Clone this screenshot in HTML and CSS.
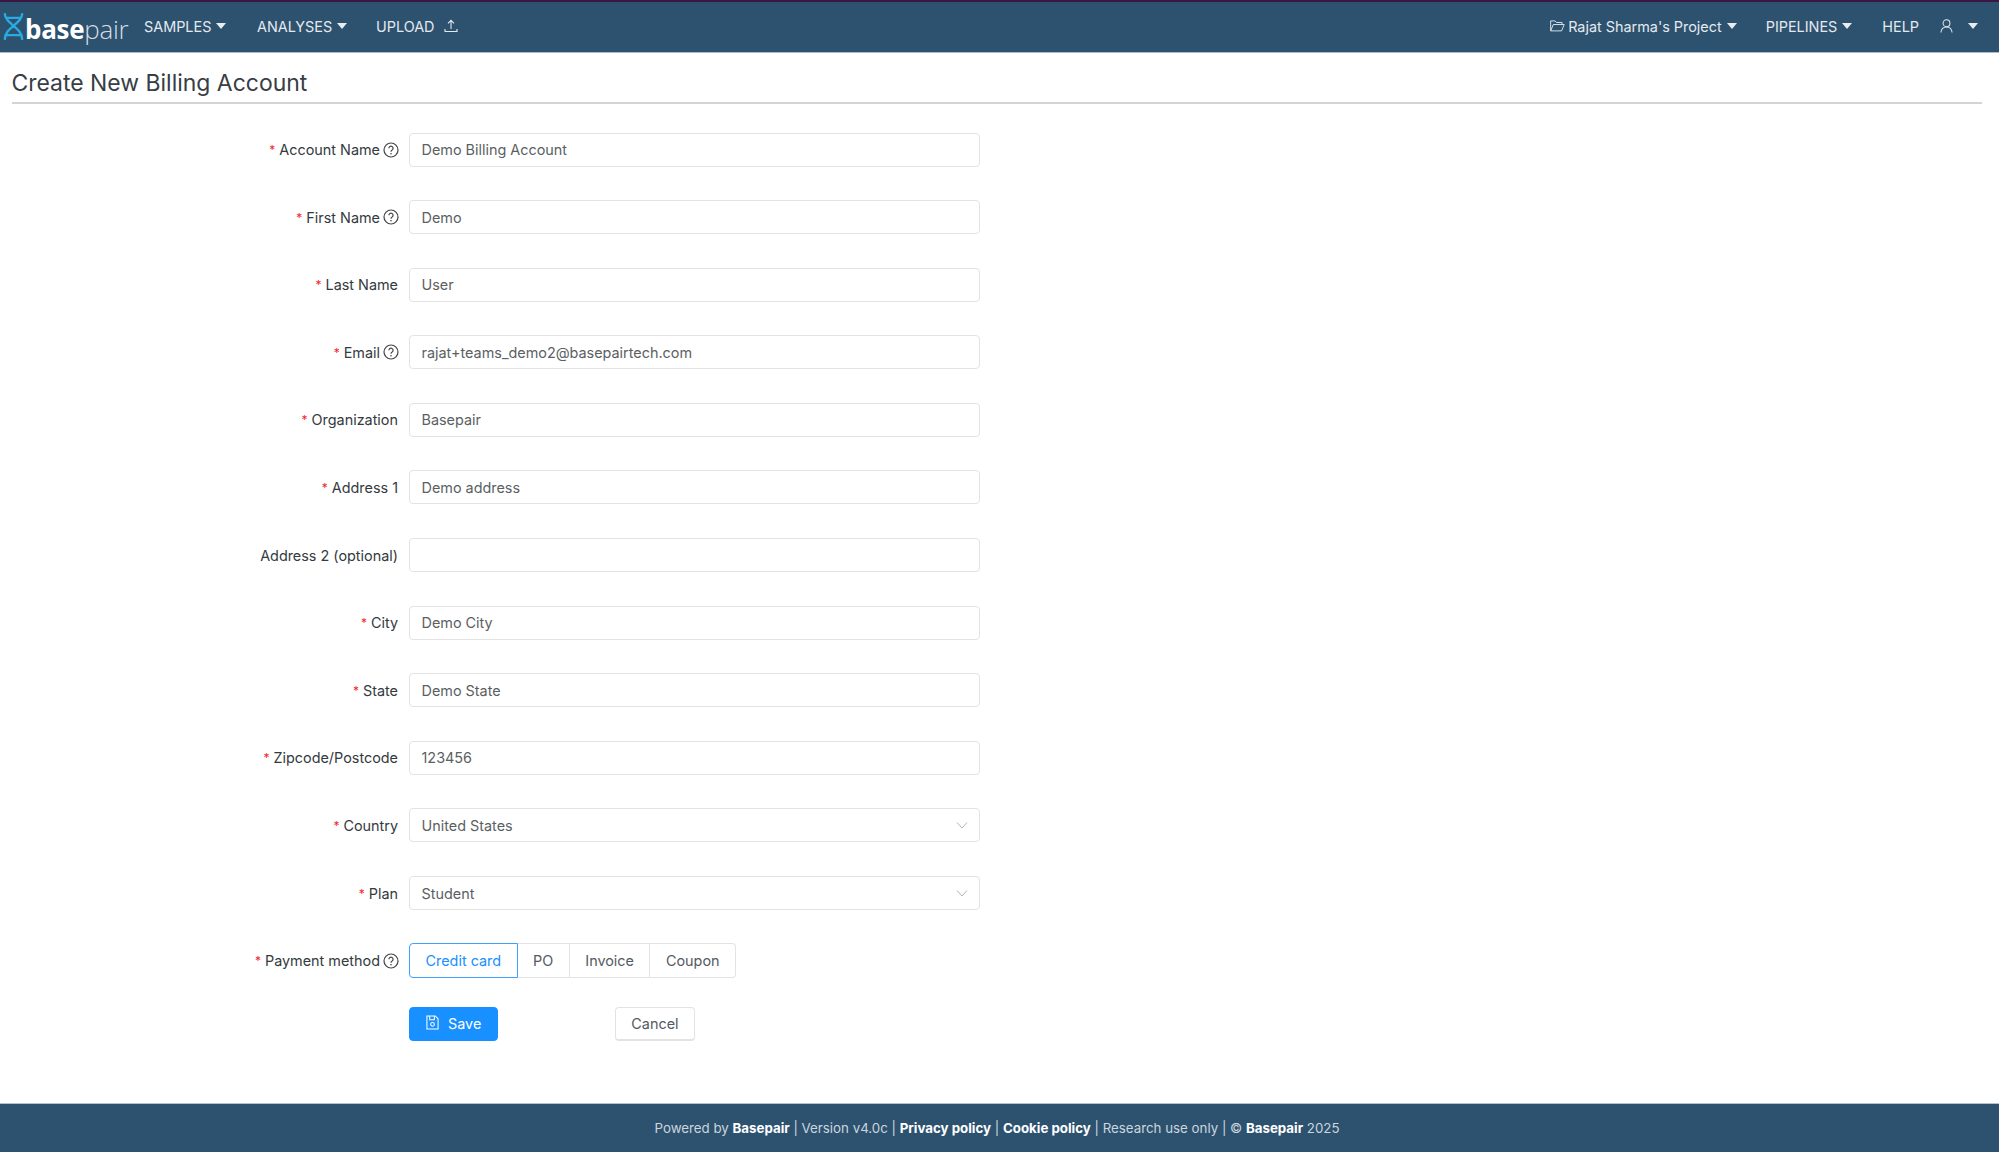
FILE: index.html
```html
<!DOCTYPE html>
<html lang="en">
<head>
<meta charset="utf-8">
<title>Create New Billing Account</title>
<link rel="stylesheet" href="styles.css">
</head>
<body>
<svg class="defs" width="0" height="0" aria-hidden="true">
  <symbol id="help" viewBox="0 0 16 16"><circle cx="8" cy="8" r="7" fill="none" stroke="currentColor" stroke-width="1.2"/><path d="M5.900 6.300a2.100 2.100 0 1 1 3.200 1.800c-.7.4-1.100.8-1.100 1.600" fill="none" stroke="currentColor" stroke-width="1.2"/><circle cx="8" cy="11.700" r=".8" fill="currentColor"/></symbol>
  <symbol id="chev" viewBox="0 0 12 12"><path d="M1 3.500l5 5.500 5-5.500" fill="none" stroke="currentColor" stroke-width="1"/></symbol>
  <symbol id="caret" viewBox="0 0 10 6"><path d="M0 0h10L5 6z" fill="currentColor"/></symbol>
</svg>
<div class="page">
<header class="topbar">
  <div class="nav-left">
    <a class="logo">
      <svg class="logo-mark" viewBox="0 0 24 28"><path d="M3 1C3 11 21 15 21 27M21 1C21 11 3 15 3 27M5 5h14M5 23h14" fill="none" stroke="#29abe2" stroke-width="2.400" stroke-linecap="round"/></svg>
      <span class="logo-text"><b>base</b><span>pair</span></span>
    </a>
    <a class="nav-item nav-samples">SAMPLES <svg class="caret"><use href="#caret"/></svg></a>
    <a class="nav-item nav-analyses">ANALYSES <svg class="caret"><use href="#caret"/></svg></a>
    <a class="nav-item">UPLOAD
      <svg class="upload" viewBox="0 0 14 14"><path d="M7 10V1.500M4 4.300L7 1.300l3 3M1 10v2.500h12V10" fill="none" stroke="currentColor" stroke-width="1.100"/></svg>
    </a>
  </div>
  <div class="nav-right">
    <a class="nav-item nav-project">
      <svg class="folder" viewBox="0 0 16 13"><path d="M.6 11.800V1h4.800l1.500 1.700h6v2.200M.6 11.800h11.800l2.900-6.900H3.400z" fill="none" stroke="currentColor" stroke-width="1"/></svg>
      Rajat Sharma's Project <svg class="caret"><use href="#caret"/></svg></a>
    <a class="nav-item nav-pipelines">PIPELINES <svg class="caret"><use href="#caret"/></svg></a>
    <a class="nav-item nav-help">HELP</a>
    <a class="nav-item nav-user">
      <svg class="user" viewBox="0 0 14 15"><circle cx="7" cy="4.500" r="3.700" fill="none" stroke="currentColor" stroke-width="1.100"/><path d="M1 14.500c.3-3.500 2.600-6 6-6s5.700 2.500 6 6" fill="none" stroke="currentColor" stroke-width="1.100"/></svg>
      <svg class="caret"><use href="#caret"/></svg></a>
  </div>
</header>

<main class="content">
  <h1 class="title">Create New Billing Account</h1>
  <form class="form">
    <div class="row"><label class="label"><i>*</i>Account Name<svg class="help"><use href="#help"/></svg></label><input class="input" value="Demo Billing Account"></div>
    <div class="row"><label class="label"><i>*</i>First Name<svg class="help"><use href="#help"/></svg></label><input class="input" value="Demo"></div>
    <div class="row"><label class="label"><i>*</i>Last Name</label><input class="input" value="User"></div>
    <div class="row"><label class="label"><i>*</i>Email<svg class="help"><use href="#help"/></svg></label><input class="input" value="rajat+teams_demo2@basepairtech.com"></div>
    <div class="row"><label class="label"><i>*</i>Organization</label><input class="input" value="Basepair"></div>
    <div class="row"><label class="label"><i>*</i>Address 1</label><input class="input" value="Demo address"></div>
    <div class="row"><label class="label">Address 2 (optional)</label><input class="input" value=""></div>
    <div class="row"><label class="label"><i>*</i>City</label><input class="input" value="Demo City"></div>
    <div class="row"><label class="label"><i>*</i>State</label><input class="input" value="Demo State"></div>
    <div class="row"><label class="label"><i>*</i>Zipcode/Postcode</label><input class="input" value="123456"></div>
    <div class="row"><label class="label"><i>*</i>Country</label><div class="input select">United States<svg class="chev"><use href="#chev"/></svg></div></div>
    <div class="row"><label class="label"><i>*</i>Plan</label><div class="input select">Student<svg class="chev"><use href="#chev"/></svg></div></div>
    <div class="row"><label class="label"><i>*</i>Payment method<svg class="help"><use href="#help"/></svg></label>
      <div class="segmented">
        <span class="seg seg-on">Credit card</span><span class="seg">PO</span><span class="seg">Invoice</span><span class="seg">Coupon</span>
      </div>
    </div>
    <div class="actions">
      <button type="button" class="btn btn-primary">
        <svg class="save" viewBox="0 0 14 16"><path d="M1 1h9l3 3v11H1zM4 1v4h5V1" fill="none" stroke="currentColor" stroke-width="1.100"/><circle cx="7" cy="10" r="2" fill="none" stroke="currentColor" stroke-width="1.100"/></svg>
        Save</button>
      <button type="button" class="btn btn-cancel">Cancel</button>
    </div>
  </form>
</main>

<footer class="footer">
  <p class="footer-text">Powered by <b>Basepair</b> | Version v4.0c | <b>Privacy policy</b> | <b>Cookie policy</b> | Research use only | © <b>Basepair</b> 2025</p>
</footer>
</div>
</body>
</html>
```
FILE: styles.css
```css
* { box-sizing: border-box; }
html, body { margin: 0; height: 100%; }
body { font-family: Inter, "Liberation Sans", sans-serif; font-size: 14.4px; color: #333a40; background: #fff; }
.defs { position: absolute; }
.page { height: 1152px; display: flex; flex-direction: column; overflow: hidden; }

.topbar { height: 53px; flex: none; background: #2d5270; border-top: 2px solid #3a1645; border-bottom: 1px solid #a9bccb; display: flex; justify-content: space-between; align-items: center; color: #e4e9ee; font-size: 14.4px; padding-bottom: 2px; }
.nav-left, .nav-right { display: flex; align-items: center; }
.nav-right { padding-right: 21px; }
.nav-item { display: flex; align-items: center; gap: 5px; white-space: nowrap; }
.logo { display: flex; align-items: center; width: 144px; padding-left: 2px; }
.logo-mark { width: 23px; height: 27px; flex: none; margin-top: 1px; }
.logo-text { font-family: "Open Sans", sans-serif; font-size: 26px; line-height: 32px; color: #fff; letter-spacing: -.3px; margin-top: 5px; }
.logo-text b { font-weight: 700; }
.logo-text span { font-weight: 300; color: #d5dde4; }
.nav-samples { width: 113px; }
.nav-analyses { width: 119px; }
.caret { width: 10px; height: 6px; flex: none; color: #e8edf1; }
.upload { width: 14px; height: 14px; margin-left: 5px; }
.folder { width: 15px; height: 12px; }
.nav-project { margin-right: 29px; }
.nav-project .folder { margin-right: -2px; }
.nav-pipelines { margin-right: 30px; }
.nav-help { margin-right: 21px; }
.nav-user { gap: 15px; }
.user { width: 13px; height: 14px; }

.content { flex: 1; padding: 0 17px 0 11.500px; }
.title { margin: 0; height: 51px; padding-top: 14px; font-size: 22.950px; line-height: 32px; font-weight: 400; color: #373e45; border-bottom: 2px solid #d4d4d4; }
.form { padding-top: 28.500px; }
.row { display: flex; align-items: center; height: 34px; margin-bottom: 33.6px; }
.label { width: 386.500px; flex: none; display: flex; justify-content: flex-end; align-items: center; white-space: nowrap; color: #333a40; }
.label i { font-style: normal; color: #f5222d; margin-right: 4px; font-size: 12px; }
.help { width: 16px; height: 16px; margin-left: 3px; margin-right: -1px; color: #444; }
.input { width: 571px; height: 34px; margin-left: 11px; padding: 0 11.500px; border: 1px solid #e3e3e3; border-radius: 4px; font: inherit; color: #5b5f63; background: #fff; outline: none; }
.select { display: flex; align-items: center; justify-content: space-between; }
.chev { width: 12px; height: 12px; color: #b4b4b4; }
.segmented { display: flex; margin-left: 11px; height: 35px; }
.seg { display: flex; align-items: center; padding: 0 15.500px; border: 1px solid #e3e3e3; border-left: 0; color: #555a5f; }
.seg:last-child { border-radius: 0 4px 4px 0; }
.seg-on { border: 1px solid #40a0ff; color: #1890ff; border-radius: 4px 0 0 4px; }
.actions { display: flex; gap: 117px; padding-left: 397.500px; margin-top: -4.600px; }
.btn { height: 34px; padding: 0 16px; border: 1px solid #e3e3e3; border-bottom-width: 2px; border-radius: 4px; background: #fff; font: inherit; color: #555a5f; display: flex; align-items: center; gap: 9px; }
.btn-cancel { padding: 0 15px; }
.btn-primary { background: #1890ff; border: 1px solid #1890ff; color: #fff; }
.save { width: 13px; height: 15px; margin-top: -3px; }

.footer { height: 49px; flex: none; background: #2d5270; border-top: 1px solid #b6c2cc; display: flex; align-items: center; justify-content: center; color: #ccd5dc; font-size: 13.300px; }
.footer-text { margin: 0; padding-right: 5px; }
.footer b { color: #fff; font-weight: 700; }
```
